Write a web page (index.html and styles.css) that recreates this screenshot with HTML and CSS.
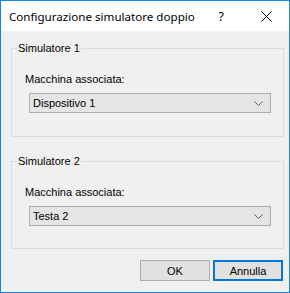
FILE: index.html
```html
<!DOCTYPE html>
<html lang="it">
<head>
<meta charset="utf-8">
<title>Configurazione simulatore doppio</title>
<link rel="stylesheet" href="styles.css">
</head>
<body>
<div class="window">
  <div class="titlebar">
    <span class="title">Configurazione simulatore doppio</span>
    <span class="help">?</span>
    <span class="close">
      <svg width="11" height="11" viewBox="0 0 11 11"><path d="M0.5 0.5L10.5 10.5M10.5 0.5L0.5 10.5" stroke="#000" stroke-width="1" fill="none"/></svg>
    </span>
  </div>
  <div class="content">
    <fieldset class="group first">
      <legend>Simulatore 1</legend>
      <div class="group-body">
        <div class="field-label">Macchina associata:</div>
        <div class="combo">
          <span>Dispositivo 1</span>
          <svg class="chev" width="9" height="5" viewBox="0 0 9 5"><path d="M0.5 0.5L4.5 4.5L8.5 0.5" stroke="#606060" stroke-width="1" fill="none"/></svg>
        </div>
      </div>
    </fieldset>
    <fieldset class="group second">
      <legend>Simulatore 2</legend>
      <div class="group-body">
        <div class="field-label">Macchina associata:</div>
        <div class="combo">
          <span>Testa 2</span>
          <svg class="chev" width="9" height="5" viewBox="0 0 9 5"><path d="M0.5 0.5L4.5 4.5L8.5 0.5" stroke="#606060" stroke-width="1" fill="none"/></svg>
        </div>
      </div>
    </fieldset>
    <div class="buttons">
      <button class="btn">OK</button>
      <button class="btn default">Annulla</button>
    </div>
  </div>
</div>
</body>
</html>
```

FILE: styles.css
```css
html, body {
  margin: 0;
  padding: 0;
}
body {
  font-family: "Liberation Sans", Arial, sans-serif;
  font-size: 11px;
  color: #000;
  background: #fff;
}
.window {
  box-sizing: border-box;
  width: 290px;
  height: 293px;
  border: 1px solid #1883d7;
  background: #f0f0f0;
  display: flex;
  flex-direction: column;
}
.titlebar {
  height: 30px;
  background: #fff;
  display: flex;
  align-items: center;
  padding-left: 8px;
  font-family: "Noto Sans", "Open Sans", sans-serif;
}
.title {
  font-size: 11.6px;
  flex: 1;
}
.help {
  font-size: 12.5px;
  margin-right: 37px;
}
.close {
  width: 11px;
  height: 11px;
  margin-right: 17px;
  display: flex;
}
.content {
  flex: 1;
  padding: 9px 5px 0 10px;
  display: flex;
  flex-direction: column;
}
.group {
  margin: 0;
  border: 1px solid #dcdcdc;
  padding: 0;
  height: 96px;
  box-sizing: border-box;
}
.group.first {
  height: 97px;
}
.group legend {
  padding: 0 1px;
  margin-left: 5px;
  line-height: 16px;
}
.group.second {
  margin-top: 16px;
}
.group-body {
  padding: 17px 12px 0 13px;
}
.field-label {
  line-height: 13px;
  height: 13px;
}
.combo {
  margin-top: 7px;
  margin-left: 4px;
  height: 20px;
  box-sizing: border-box;
  border: 1px solid #adadad;
  background: #e5e5e5;
  display: flex;
  align-items: center;
  padding: 0 7px 0 3px;
}
.combo span {
  flex: 1;
}
.buttons {
  display: flex;
  justify-content: flex-end;
  gap: 3px;
  margin-top: 11px;
  padding-right: 1px;
}
.btn {
  width: 70px;
  height: 21px;
  box-sizing: border-box;
  font-family: inherit;
  font-size: 11px;
  color: #000;
  background: #e1e1e1;
  border: 1px solid #adadad;
  padding: 0;
}
.btn.default {
  border: 2px solid #0078d7;
}
```
